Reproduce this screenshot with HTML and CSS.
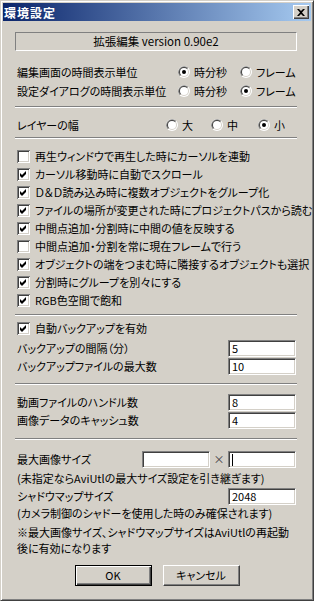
FILE: index.html
```html
<!DOCTYPE html>
<html lang="ja">
  <head>
    <meta charset="UTF-8" />
    <title>環境設定</title>
    <link rel="stylesheet" href="styles.css">
  </head>
  <body>
    <!-- ラジオボタン・チェックボックスの部品 -->
    <svg class="defs" width="0" height="0">
      <symbol id="radio" viewBox="0 0 12 12">
        <circle cx="6" cy="6" r="6" fill="#fff" />
        <path d="M10.24 1.76A6 6 0 0 0 1.76 10.24Z" fill="#808080" />
        <circle cx="6" cy="6" r="5" fill="#d4d0c8" />
        <path d="M9.54 2.46A5 5 0 0 0 2.46 9.54Z" fill="#404040" />
        <circle cx="6" cy="6" r="4" fill="#fff" />
      </symbol>
      <symbol id="radio-on" viewBox="0 0 12 12">
        <use href="#radio" />
        <circle cx="6" cy="6" r="2" fill="#000" />
      </symbol>
      <symbol id="cb" viewBox="0 0 13 13">
        <rect width="13" height="13" fill="#fff" />
        <path d="M1 11H12V12H1ZM11 1H12V11H11Z" fill="#d4d0c8" />
        <path d="M1 1H12V2H2V12H1Z" fill="#404040" />
        <path d="M0 0H13V1H1V13H0Z" fill="#808080" />
      </symbol>
      <symbol id="cb-on" viewBox="0 0 13 13">
        <use href="#cb" />
        <polygon points="3,5 5,7 9,3 9,6 5,10 3,8" fill="#000" />
      </symbol>
    </svg>

    <div class="window">
      <div class="titlebar">
        <span class="title">環境設定</span>
        <span class="close">
          <svg width="8" height="7" viewBox="0 0 8 7"><path d="M0 0H2L4 2L6 0H8L5 3.5L8 7H6L4 5L2 7H0L3 3.5Z" /></svg>
        </span>
      </div>

      <div class="content">
        <div class="version">拡張編集 version 0.90e2</div>

        <!-- 時間表示単位 -->
        <div class="row">
          <span class="label-time">編集画面の時間表示単位</span>
          <span class="opt opt-first"><svg class="rd"><use href="#radio-on" /></svg>時分秒</span>
          <span class="opt"><svg class="rd"><use href="#radio" /></svg>フレーム</span>
        </div>
        <div class="row">
          <span class="label-time">設定ダイアログの時間表示単位</span>
          <span class="opt opt-first"><svg class="rd"><use href="#radio" /></svg>時分秒</span>
          <span class="opt"><svg class="rd"><use href="#radio-on" /></svg>フレーム</span>
        </div>

        <div class="sep sep-1"></div>

        <div class="row">
          <span class="label-layer">レイヤーの幅</span>
          <span class="opt opt-l1"><svg class="rd"><use href="#radio" /></svg>大</span>
          <span class="opt opt-l2"><svg class="rd"><use href="#radio" /></svg>中</span>
          <span class="opt"><svg class="rd"><use href="#radio-on" /></svg>小</span>
        </div>

        <div class="sep sep-2"></div>

        <!-- チェック項目 -->
        <div class="check"><svg class="cb"><use href="#cb" /></svg>再生ウィンドウで再生した時にカーソルを連動</div>
        <div class="check"><svg class="cb"><use href="#cb-on" /></svg>カーソル移動時に自動でスクロール</div>
        <div class="check"><svg class="cb"><use href="#cb-on" /></svg>Ｄ＆Ｄ読み込み時に複数オブジェクトをグループ化</div>
        <div class="check"><svg class="cb"><use href="#cb-on" /></svg>ファイルの場所が変更された時にプロジェクトパスから読む</div>
        <div class="check"><svg class="cb"><use href="#cb-on" /></svg>中間点追加・分割時に中間の値を反映する</div>
        <div class="check"><svg class="cb"><use href="#cb" /></svg>中間点追加・分割を常に現在フレームで行う</div>
        <div class="check"><svg class="cb"><use href="#cb-on" /></svg>オブジェクトの端をつまむ時に隣接するオブジェクトも選択</div>
        <div class="check"><svg class="cb"><use href="#cb-on" /></svg>分割時にグループを別々にする</div>
        <div class="check"><svg class="cb"><use href="#cb-on" /></svg>RGB色空間で飽和</div>

        <div class="sep sep-3"></div>

        <!-- バックアップ -->
        <div class="check"><svg class="cb"><use href="#cb-on" /></svg>自動バックアップを有効</div>
        <div class="row field-row first-field">
          <span>バックアップの間隔（分）</span>
          <span class="field">5</span>
        </div>
        <div class="row field-row">
          <span>バックアップファイルの最大数</span>
          <span class="field">10</span>
        </div>

        <div class="sep sep-4"></div>

        <div class="row field-row">
          <span>動画ファイルのハンドル数</span>
          <span class="field">8</span>
        </div>
        <div class="row field-row">
          <span>画像データのキャッシュ数</span>
          <span class="field">4</span>
        </div>

        <div class="sep sep-5"></div>

        <!-- 画像サイズ -->
        <div class="row field-row">
          <span>最大画像サイズ</span>
          <span class="size-group">
            <span class="field"></span>
            <span class="times">×</span>
            <span class="field"><span class="caret"></span></span>
          </span>
        </div>
        <div class="row">(未指定ならAviUtlの最大サイズ設定を引き継ぎます)</div>
        <div class="row field-row">
          <span>シャドウマップサイズ</span>
          <span class="field">2048</span>
        </div>
        <div class="row note">(カメラ制御のシャドーを使用した時のみ確保されます)</div>

        <p class="warn">※最大画像サイズ、シャドウマップサイズはAviUtlの再起動<br>後に有効になります</p>

        <div class="buttons">
          <span class="btn btn-default">OK</span>
          <span class="btn">キャンセル</span>
        </div>
      </div>
    </div>
  </body>
</html>
```

FILE: styles.css
```css
* {
  box-sizing: border-box;
}
body {
  margin: 0;
  background: #d4d0c8;
  color: #000;
  font-family: "Noto Sans CJK JP", "Liberation Sans", sans-serif;
  font-size: 11px;
  font-feature-settings: "palt";
}
.defs {
  position: absolute;
}
.window {
  width: 314px;
  height: 601px;
  padding: 2px;
  background: #d4d0c8;
  border: 1px solid;
  border-color: #d4d0c8 #404040 #404040 #d4d0c8;
  box-shadow: inset 1px 1px #fff, inset -1px -1px #808080;
}
.titlebar {
  height: 18px;
  padding: 0 2px 0 1px;
  display: flex;
  align-items: center;
  justify-content: space-between;
  background: linear-gradient(to right, #0a246a, #a6caf0);
}
.title {
  color: #fff;
  font-size: 12px;
  font-weight: bold;
  letter-spacing: 1px;
}
.close {
  width: 16px;
  height: 14px;
  display: flex;
  align-items: center;
  justify-content: center;
  background: #d4d0c8;
  box-shadow: inset 1px 1px #fff, inset -1px -1px #404040, inset -2px -2px #808080;
}
.close svg {
  display: block;
}
.content {
  padding: 11px 14px 0 12px;
}
.version {
  height: 19px;
  line-height: 17px;
  margin-bottom: 11px;
  font-size: 11.5px;
  text-align: center;
  border: 1px solid;
  border-color: #808080 #fff #fff #808080;
}
.row {
  height: 19px;
  padding-left: 2px;
  display: flex;
  align-items: center;
  white-space: nowrap;
}
.label-time {
  width: 161px;
}
.label-layer {
  width: 149px;
}
.opt {
  display: flex;
  align-items: center;
  gap: 4px;
}
.opt-first {
  width: 62px;
}
.opt-l1 {
  width: 45px;
}
.opt-l2 {
  width: 47px;
}
.rd {
  width: 12px;
  height: 12px;
  display: block;
}
.sep {
  border-top: 1px solid #808080;
  border-bottom: 1px solid #fff;
}
.sep-1 {
  margin: 6px 0 7px;
}
.sep-2 {
  margin: 3px 0 8px;
}
.sep-3 {
  margin: 5px 0 3px;
}
.sep-4 {
  margin: 8px 0 8px;
}
.sep-5 {
  margin: 9px 0 10px;
}
.check {
  height: 18px;
  padding-left: 2px;
  display: flex;
  align-items: center;
  gap: 5px;
  white-space: nowrap;
}
.cb {
  width: 13px;
  height: 13px;
  display: block;
  flex: none;
}
.field-row {
  height: 18px;
  justify-content: space-between;
  padding-right: 1px;
}
.first-field {
  margin-top: 2px;
}
.field {
  width: 68px;
  height: 17px;
  margin-top: 1px;
  padding-left: 3px;
  line-height: 15px;
  background: #fff;
  border: 1px solid;
  border-color: #808080 #fff #fff #808080;
  box-shadow: inset 1px 1px #404040, inset -1px -1px #d4d0c8;
}
.size-group {
  display: flex;
  align-items: center;
}
.times {
  width: 18px;
  text-align: center;
  color: #404040;
}
.caret {
  display: inline-block;
  width: 1px;
  height: 12px;
  margin-top: 2px;
  background: #000;
  vertical-align: top;
}
.note {
  height: 16px;
}
.warn {
  margin: 3px 0 0;
  padding-left: 2px;
  line-height: 16px;
  white-space: nowrap;
}
.buttons {
  margin-top: 9px;
  padding-left: 2px;
  display: flex;
  justify-content: center;
  gap: 11px;
}
.btn {
  width: 77px;
  height: 21px;
  line-height: 19px;
  text-align: center;
  border: 1px solid;
  border-color: #fff #404040 #404040 #fff;
  box-shadow: inset -1px -1px #808080;
}
.btn-default {
  border-color: #000;
  box-shadow: inset 1px 1px #fff, inset -1px -1px #404040, inset -2px -2px #808080;
}
```
